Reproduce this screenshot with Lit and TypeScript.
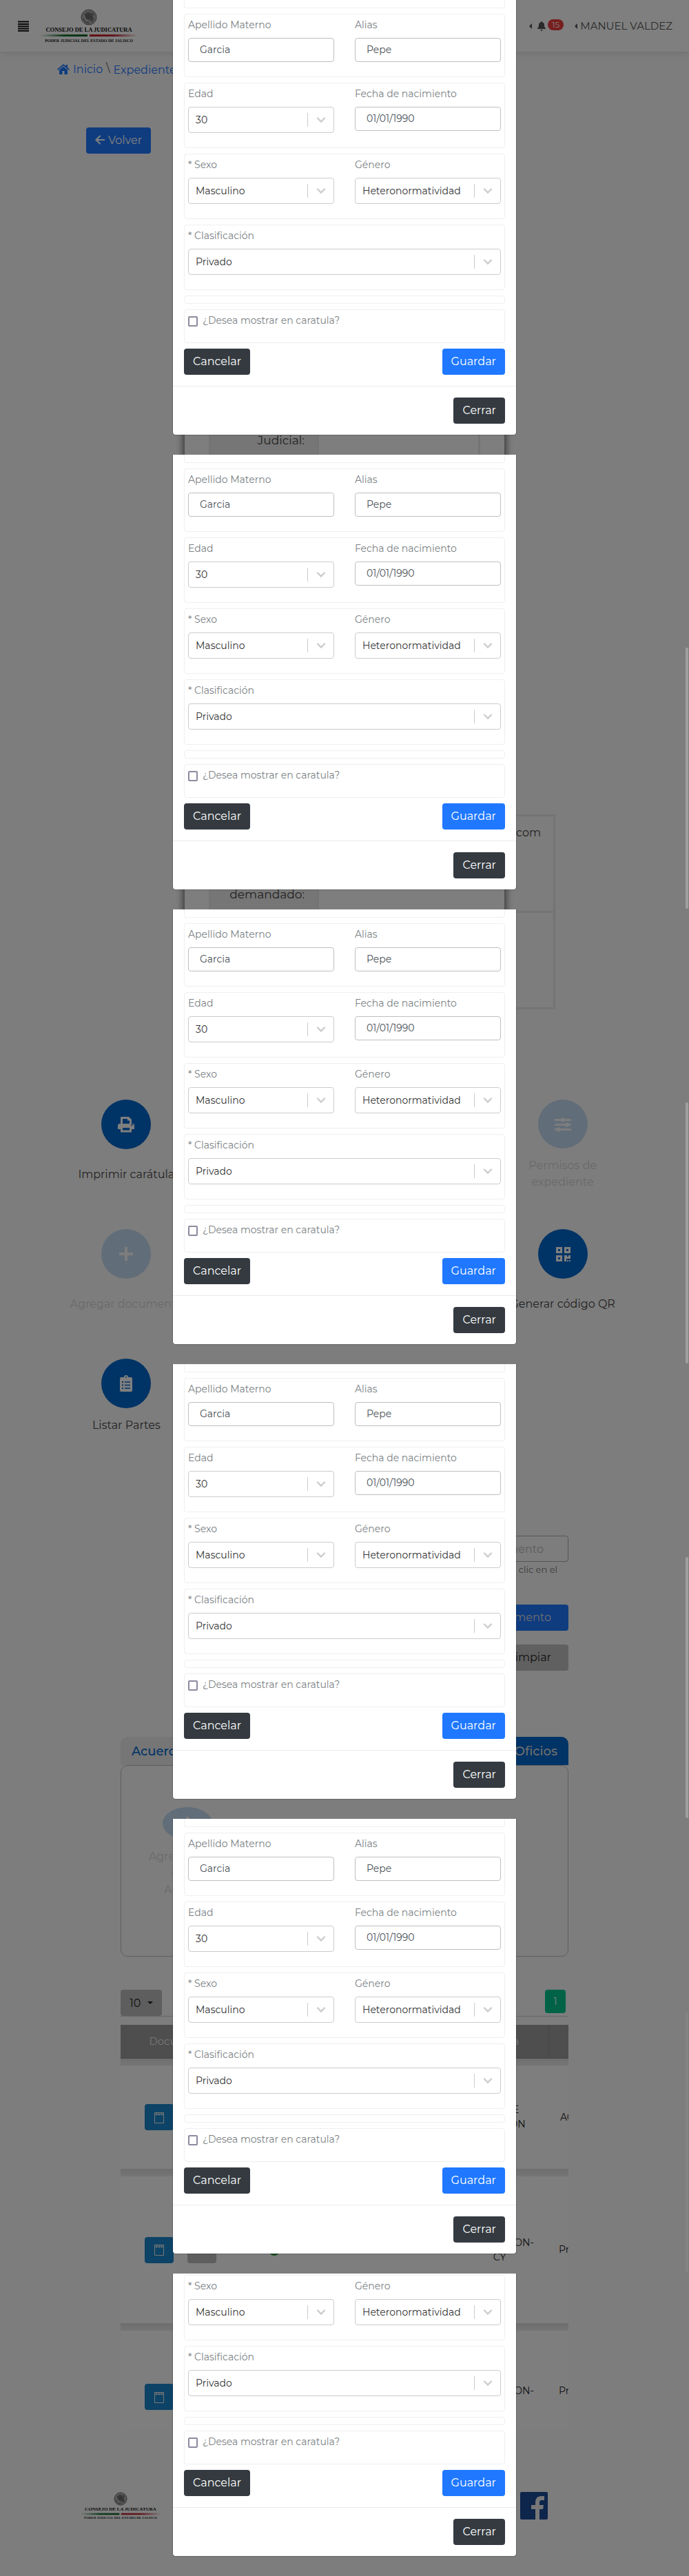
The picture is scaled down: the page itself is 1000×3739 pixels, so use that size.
import { LitElement, html, css, svg, nothing } from "lit";
import { customElement, property } from "lit/decorators.js";

const fontStack = css`Montserrat, Inter, "Open Sans", "Liberation Sans", sans-serif`;

const base = css`
  * {
    box-sizing: border-box;
  }
  button,
  input,
  select {
    font-family: inherit;
    margin: 0;
  }
  button {
    cursor: pointer;
  }
  a {
    text-decoration: none;
    color: inherit;
  }
  svg {
    display: block;
    flex: none;
  }
`;

const icons = {
  print: svg`<path fill="currentColor" fill-rule="evenodd" d="M5 1h11l4 4v6h1.500q2.500 0 2.500 2.500V19h-4v4.500H4V19H0v-5.500Q0 11 2.500 11H4V2q0-1 1-1zM7 4v7h10V6.500h-3V4zM7 17v3.500h10V17zM19.200 12.700a1.300 1.300 0 1 0 2.600 0a1.300 1.300 0 1 0-2.600 0z"/>`,
  plus: svg`<path fill="currentColor" d="M10 2h4v8h8v4h-8v8h-4v-8H2v-4h8z"/>`,
  list: svg`<path fill="currentColor" fill-rule="evenodd" d="M5 3h4a3 3 0 0 1 6 0h4q2 0 2 2v17q0 2-2 2H5q-2 0-2-2V5q0-2 2-2zM11 3a1 1 0 1 0 2 0a1 1 0 1 0-2 0zM6 9v2h2V9zm4 .3v1.400h8V9.300zM6 13.500v2h2v-2zm4 .3v1.400h8v-1.400zM6 18v2h2v-2zm4 .3v1.400h8v-1.400z"/>`,
  sliders: svg`<path fill="currentColor" d="M0 4h10V2.500h4V4h10v3H14v1.500h-4V7H0zM0 11h16V9.500h4V11h4v3h-4v1.500h-4V14H0zM0 18h4v-1.500h4V18h16v3H8v1.500H4V21H0z"/>`,
  qr: svg`<path fill="currentColor" fill-rule="evenodd" d="M2 2h9v9H2zM5 5v3h3V5zM14 2h9v9h-9zM17 5v3h3V5zM2 14h9v9H2zM5 17v3h3v-3zM14 14h4v2h2v-2h3v5h-6v4h-3zM18 21h2v2h-2zM21 21h2v2h-2z"/>`,
};

@customElement("court-logo")
class CourtLogo extends LitElement {
  static styles = css`
    :host {
      display: block;
    }
    svg {
      display: block;
      width: 100%;
      height: auto;
    }
    .name {
      font: bold 17px "Liberation Serif", serif;
      fill: #111;
    }
    .branch {
      font: bold 12px "Liberation Serif", serif;
      fill: #222;
    }
  `;
  render() {
    return html`<svg viewBox="0 0 284 100" role="img" aria-label="Consejo de la Judicatura">
      <defs>
        <linearGradient id="g"><stop offset="0" stop-color="#2a7a3a" stop-opacity="0" /><stop offset=".5" stop-color="#1d7a35" /><stop offset="1" stop-color="#12602a" /></linearGradient>
        <linearGradient id="r"><stop offset="0" stop-color="#c41c2c" /><stop offset=".5" stop-color="#c4303c" /><stop offset="1" stop-color="#c41c2c" stop-opacity="0" /></linearGradient>
      </defs>
      <g transform="scale(2)">
        <circle cx="71" cy="12" r="11" fill="#b4b4b4" stroke="#666" stroke-width="1" />
        <circle cx="71" cy="12" r="9" fill="none" stroke="#888" stroke-width="1" stroke-dasharray="1 1" />
        <path d="M64 8q5-5 9-3q5 2 4 7q3 3-1 7q-3-1-4-4q-5 0-8-7z" fill="#777" />
        <path d="M63 14q3 7 9 6M67 9l6 6M69 7l6 6M66 12l6 5M76 5l2 4" stroke="#444" fill="none" stroke-width="1" />
        <path d="M0 37h69v3H0z" fill="url(#g)" />
        <path d="M72 37h69v3H72z" fill="url(#r)" />
      </g>
      <text class="name" x="142" y="66" text-anchor="middle">CONSEJO DE LA JUDICATURA</text>
      <text class="branch" x="142" y="95" text-anchor="middle">PODER JUDICIAL DEL ESTADO DE JALISCO</text>
    </svg>`;
  }
}

@customElement("select-field")
class SelectField extends LitElement {
  @property() label = "";
  @property() value = "";
  static styles = [
    base,
    css`
      :host {
        display: block;
      }
      label {
        display: block;
        margin-bottom: 8px;
        line-height: 21px;
        color: #7a7f84;
      }
      .box {
        display: grid;
        grid-template-columns: 1fr 38px;
        align-items: center;
        height: 38px;
        border: 1px solid #ccc;
        border-radius: 4px;
        background: #fff;
      }
      select {
        grid-area: 1 / 1 / 2 / 3;
        width: 100%;
        height: 36px;
        padding: 0 40px 0 10px;
        border: 0;
        background: none;
        appearance: none;
        font-size: inherit;
        font-weight: inherit;
        color: #333;
      }
      .mark {
        grid-area: 1 / 2 / 2 / 3;
        display: grid;
        place-items: center;
        height: 20px;
        border-left: 1px solid #ccc;
        color: #ccc;
        pointer-events: none;
      }
    `,
  ];
  render() {
    return html`<label for="s">${this.label}</label>
      <div class="box">
        <select id="s"><option>${this.value}</option></select>
        <span class="mark"><svg width="14" height="10" viewBox="0 0 14 10"><path d="M2 2.500l5 5l5-5" fill="none" stroke="currentColor" stroke-width="2.400" stroke-linecap="round" /></svg></span>
      </div>`;
  }
}

@customElement("party-modal")
class PartyModal extends LitElement {
  @property({ type: Boolean }) short = false;
  static styles = [
    base,
    css`
      :host {
        display: block;
        width: 50%;
        margin: 0 auto 28px;
        border: 1px solid rgba(0, 0, 0, 0.2);
        border-top: 0;
        border-radius: 0 0 5px 5px;
        background: #fff;
        background-clip: padding-box;
        font-size: 14px;
      }
      .body {
        display: flex;
        flex-direction: column;
        gap: 8px;
        padding: 0 16px 16px;
      }
      .body.short {
        padding-top: 2px;
      }
      .card {
        display: grid;
        grid-template-columns: 1fr 1fr;
        column-gap: 30px;
        padding: 5px 5px 21px;
        border: 1px solid #efefef;
        border-radius: 4px;
      }
      .stub,
      .blank {
        height: 12px;
        border: 1px solid #efefef;
        border-radius: 4px;
      }
      .stub {
        border-top: 0;
        border-radius: 0 0 4px 4px;
      }
      .wide {
        grid-column: 1 / 3;
      }
      .text label {
        display: block;
        margin-bottom: 8px;
        line-height: 21px;
        color: #7a7f84;
      }
      .text input {
        display: block;
        width: 100%;
        height: 35px;
        padding: 0 16px 1px;
        border: 1px solid #bfbfbf;
        border-radius: 4px;
        font-size: 14px;
        color: #495057;
      }
      .check {
        display: flex;
        align-items: center;
        gap: 7px;
        line-height: 21px;
        color: #7a7f84;
      }
      .check input {
        appearance: none;
        width: 14px;
        height: 15px;
        margin-top: 2px;
        border: 2px solid #8d8a9f;
        border-radius: 2px;
        background: #fff;
      }
      .actions,
      .footer {
        display: flex;
        justify-content: space-between;
      }
      .footer {
        justify-content: flex-end;
        padding: 16px;
        border-top: 1px solid #e9ecef;
      }
      button {
        height: 38px;
        padding: 0 13px 2px;
        border: 0;
        border-radius: 4px;
        font-size: 16px;
        color: #fff;
        background: #343a40;
      }
      .save {
        background: #1f78ff;
      }
    `,
  ];
  private text(id: string, label: string, value: string) {
    return html`<div class="text">
      <label for=${id}>${label}</label><input id=${id} type="text" .value=${value} />
    </div>`;
  }
  render() {
    return html`<div class="body ${this.short ? "short" : ""}">
        ${this.short
          ? nothing
          : html`<div class="stub"></div>
              <div class="card">${this.text("materno", "Apellido Materno", "Garcia")}${this.text("alias", "Alias", "Pepe")}</div>
              <div class="card">
                <select-field label="Edad" value="30"></select-field>
                ${this.text("fecha", "Fecha de nacimiento", "01/01/1990")}
              </div>`}
        <div class="card">
          <select-field label="* Sexo" value="Masculino"></select-field>
          <select-field label="Género" value="Heteronormatividad"></select-field>
        </div>
        <div class="card"><select-field class="wide" label="* Clasificación" value="Privado"></select-field></div>
        <div class="blank"></div>
        <div class="card"><label class="check wide"><input type="checkbox" />¿Desea mostrar en caratula?</label></div>
        <div class="actions"><button>Cancelar</button><button class="save">Guardar</button></div>
      </div>
      <div class="footer"><button>Cerrar</button></div>`;
  }
}

@customElement("app-root")
class AppRoot extends LitElement {
  static styles = [
    base,
    css`
      :host {
        display: block;
        position: relative;
        overflow: hidden;
        background: #fbfbfb;
        font-family: ${fontStack};
        font-size: 16px;
        line-height: 24px;
        color: #444;
      }
      .overlay {
        position: absolute;
        inset: 0;
        background: rgba(0, 0, 0, 0.5);
      }
      .slice {
        position: relative;
      }
      .thumb {
        position: absolute;
        right: 1px;
        top: 280px;
        width: 4px;
        height: 379px;
        border-radius: 2px;
        background: #a0a0a0;
      }
      .faint {
        background: #848484;
      }
      .header {
        display: flex;
        align-items: center;
        justify-content: space-between;
        height: 75px;
        padding: 0 24px 0 26px;
        background: #fff;
        box-shadow: 0 2px 10px rgba(0, 0, 0, 0.12);
      }
      .brand,
      .user,
      .bell {
        display: flex;
        align-items: center;
      }
      .brand {
        gap: 16px;
      }
      .menu {
        padding: 0;
        border: 0;
        background: none;
        color: #111;
      }
      .brand court-logo {
        width: 142px;
      }
      .user {
        gap: 16px;
        font-size: 15px;
        color: #555;
      }
      .user a {
        display: flex;
        align-items: center;
        gap: 4px;
      }
      .user .bell {
        gap: 8px;
      }
      .badge {
        margin: -4px 0 0 -5px;
        padding: 0 6px;
        border-radius: 10px;
        background: #ee3c3c;
        color: #fff;
        font-size: 12px;
        line-height: 16px;
      }
      .crumbs {
        display: flex;
        gap: 5px;
        padding: 12px 83px 0;
        color: #666;
      }
      .crumbs a {
        display: flex;
        align-items: center;
        gap: 5px;
        color: #1f78ff;
      }
      .crumbs .here {
        padding-top: 3px;
      }
      .main {
        padding: 71px 125px 0;
      }
      .back {
        display: flex;
        align-items: center;
        gap: 5px;
        height: 38px;
        padding: 0 13px 2px;
        border: 0;
        border-radius: 4px;
        background: #1f78ff;
        color: #fff;
        font-size: 16px;
      }
      .case {
        height: 1248px;
        margin: 33px 143px 0;
        padding: 35px;
        background: #fdfdfd;
        box-shadow: 0 0 10px 2px rgba(0, 0, 0, 0.6);
      }
      .case table {
        border-collapse: collapse;
        width: 394px;
        table-layout: fixed;
        margin-bottom: 20px;
      }
      .case .mail {
        width: 503px;
      }
      .case th {
        width: 157px;
        padding: 12px 18px 4px;
        border: 3px solid #e8e8e8;
        background: #ececec;
        font-size: 17px;
        font-weight: 400;
        text-align: right;
        vertical-align: bottom;
      }
      .case td {
        padding: 12px 18px;
        border: 3px solid #e8e8e8;
        text-align: right;
        vertical-align: top;
      }
      .case .court th {
        height: 380px;
        padding-bottom: 20px;
      }
      .rest th {
        height: 488px;
      }
      .party th {
        height: 140px;
      }
      .case .party th {
        padding-bottom: 12px;
      }
      .actions {
        display: grid;
        grid-template-columns: 1fr 1fr 1fr;
        row-gap: 56px;
        padding: 92px 25px 0;
        text-align: center;
      }
      .action {
        display: flex;
        flex-direction: column;
        align-items: center;
        gap: 13px;
      }
      .action.tall {
        height: 132px;
      }
      .label {
        display: grid;
        flex: 1;
        align-items: center;
        max-width: 160px;
      }
      .wide {
        max-width: none;
      }
      .disc {
        display: grid;
        place-items: center;
        width: 72px;
        height: 72px;
        padding: 0;
        border: 0;
        border-radius: 50%;
        background: #0067cc;
        color: #fff;
      }
      .off {
        opacity: 0.22;
      }
      .page {
        padding: 0 175px;
      }
      .search {
        display: flex;
        flex-direction: column;
        align-items: flex-end;
        padding-top: 148px;
      }
      .search label {
        width: 60%;
        padding: 0 16px;
        text-align: right;
        font-size: 13px;
        line-height: 22px;
        color: #777;
      }
      .search input {
        width: 60%;
        height: 38px;
        padding: 0 35px;
        border: 1px solid #aaa;
        border-radius: 4px;
        background: none;
        text-align: right;
        font-size: 16px;
      }
      .search input::placeholder {
        color: #bbb;
      }
      .search button {
        height: 38px;
        margin-bottom: 20px;
        padding: 0 25px 2px;
        border: 0;
        border-radius: 4px;
        font-size: 16px;
      }
      .find {
        margin-top: 40px;
        background: #1f78ff;
        color: #ddd;
      }
      .clear {
        background: #c0c0c0;
        color: #222;
      }
      .tabs {
        display: flex;
        justify-content: space-between;
        padding-top: 76px;
      }
      .tab {
        height: 41px;
        padding: 0 16px;
        border: 0;
        border-radius: 10px 10px 0 0;
        background: #ececec;
        color: #0067cc;
        font-size: 18px;
        font-weight: 500;
      }
      .tab.on {
        background: #0067cc;
        color: #ddd;
      }
      .panel {
        height: 278px;
        padding: 60px;
        border: 1px solid #bdbdbd;
        border-radius: 10px;
      }
      .panel .action {
        width: 72px;
      }
      .panel .label {
        width: 130px;
        text-align: center;
        white-space: pre-line;
      }
      .pager {
        display: flex;
        justify-content: space-between;
        margin-top: 48px;
        padding-right: 4px;
        border-bottom: 1px solid #ccc;
      }
      .size {
        display: flex;
        align-items: center;
        gap: 10px;
        height: 38px;
        padding: 0 13px;
        border: 0;
        border-radius: 4px;
        background: #bdbdbd;
        color: #222;
        font-size: 16px;
      }
      .num {
        width: 30px;
        height: 34px;
        padding: 0;
        border: 0;
        border-radius: 4px;
        background: #00c68e;
        color: #fff;
        font-size: 14px;
      }
      .scroll {
        overflow: hidden;
        margin-top: 12px;
        background: #fdfdfd;
      }
      .docs {
        border-collapse: collapse;
        table-layout: fixed;
        width: 729px;
        font-size: 14px;
        line-height: 21px;
        text-align: center;
        color: #222;
      }
      .docs th {
        height: 48px;
        padding: 0;
        border-right: 1px solid #8a8a8a;
        border-bottom: 1px solid #888;
        background: #9c9c9c;
        color: #eee;
        font-size: 15px;
        font-weight: 400;
      }
      .docs td {
        height: 213px;
        padding: 0;
      }
      .docs .first td {
        height: 150px;
      }
      .docs .last td {
        height: 144px;
        padding-top: 77px;
        vertical-align: top;
      }
      .docs .band td {
        height: 11px;
        background: linear-gradient(#dcdcdc, #ececec);
      }
      .c1 {
        width: 174px;
      }
      .c2 {
        width: 98px;
      }
      .c3 {
        width: 207px;
      }
      .c4 {
        width: 142px;
      }
      .tools {
        display: flex;
        justify-content: center;
        gap: 20px;
      }
      .tool {
        display: grid;
        place-items: center;
        width: 42px;
        height: 38px;
        padding: 0;
        border: 0;
        border-radius: 4px;
        background: #1a86cc;
        color: #eee;
      }
      .tool.grey {
        background: #bdbdbd;
      }
      .ok {
        width: 16px;
        height: 16px;
        margin: 0 auto;
        border-radius: 50%;
        background: #2c9a3c;
      }
      .footer {
        display: flex;
        justify-content: space-between;
        padding: 90px 205px 82px 116px;
      }
      .footer court-logo {
        width: 118px;
      }
    `,
  ];

  private action(icon: unknown, label: string, opts: { off?: boolean; wide?: boolean; short?: boolean } = {}) {
    return html`<div class="action ${opts.short ? "" : "tall"} ${opts.off ? "off" : ""}">
      <button class="disc" aria-label=${label} ?disabled=${opts.off}>
        <svg width="24" height="24" viewBox="0 0 24 24">${icon}</svg>
      </button>
      <span class="label ${opts.wide ? "wide" : ""}">${label}</span>
    </div>`;
  }

  private row(kind: string, what: string, who: string) {
    const cal = html`<svg width="14" height="17" viewBox="0 0 14 17"><path d="M.5 1.500h13v15H.5z" fill="none" stroke="currentColor" /><path d="M1 2h12v3H1z" fill="currentColor" opacity=".35" /><path d="M2 4.500h2.500M5.800 4.500h2.500M9.600 4.500H12M3.200 2.500v3M7 2.500v3M10.800 2.500v3" stroke="currentColor" /></svg>`;
    return html`<tr class=${kind}>
      <td><div class="tools"><button class="tool" aria-label="Ver">${cal}</button><button class="tool grey" aria-label="Descargar"></button></div></td>
      <td><div class="ok"></div></td>
      <td></td>
      <td>${what.split("|").map((t, i) => (i ? html`<br />${t}` : t))}</td>
      <td>${who}</td>
    </tr>`;
  }

  render() {
    const caret = html`<svg width="4" height="8" viewBox="0 0 4 8"><path d="M4 0v8L0 4z" fill="currentColor" /></svg>`;
    const band = html`<tr class="band"><td colspan="5"></td></tr>`;
    return html`
      <header class="header">
        <div class="brand">
          <button class="menu" aria-label="Menú">
            <svg width="16" height="16" viewBox="0 0 16 16"><path d="M0 1.500h16M0 5h16M0 8.300h16M0 11.500h16M0 14.800h16" stroke="currentColor" stroke-width="2" /></svg>
          </button>
          <court-logo></court-logo>
        </div>
        <nav class="user">
          <a class="bell" href="#">${caret}<svg width="12" height="14" viewBox="0 0 12 14"><path d="M6 0q1 0 1 1q3 1 3 4q0 4 2 5v1H0v-1q2-1 2-5q0-3 3-4q0-1 1-1zM4.500 12h3q0 2-1.500 2t-1.500-2z" fill="currentColor" /></svg><span class="badge">15</span></a>
          <a href="#">${caret}MANUEL VALDEZ</a>
        </nav>
      </header>
      <nav class="crumbs">
        <a href="#"><svg width="18" height="15" viewBox="0 0 18 15"><path d="M9 3.500l6 5V14q0 1-1 1h-3.500v-5h-3v5H4q-1 0-1-1V8.500zM9 0l3.500 3V1H15v4l3 2.500L17 9L9 2.300L1 9L0 7.500z" fill="currentColor" /></svg>Inicio</a>
        <span>\\</span>
        <a class="here" href="#">Expediente</a>
      </nav>
      <div class="main">
        <button class="back"><svg width="14" height="14" viewBox="0 0 14 14"><path d="M14 7H2M7.500 1L1.500 7l6 6" fill="none" stroke="currentColor" stroke-width="2.200" /></svg>Volver</button>
        <section class="case">
          <table>
            <tr class="court"><th>Órgano Judicial:</th><td></td></tr>
            <tr class="rest"><th></th><td></td></tr>
          </table>
          <table class="mail">
            <tr class="party"><th>Correo del demandado:</th><td>.com</td></tr>
            <tr class="party"><th></th><td></td></tr>
          </table>
        </section>
      </div>
      <section class="actions">
        ${this.action(icons.print, "Imprimir carátula")}<span></span>${this.action(icons.sliders, "Permisos de expediente", { off: true })}
        ${this.action(icons.plus, "Agregar documento", { off: true, wide: true })}<span></span>${this.action(icons.qr, "Generar código QR")}
        ${this.action(icons.list, "Listar Partes", { short: true })}
      </section>
      <div class="page">
        <section class="search">
          <input id="doc" type="text" placeholder="documento" />
          <label for="doc">haz clic en el</label>
          <button class="find">Buscar documento</button>
          <button class="clear">Limpiar</button>
        </section>
        <div class="tabs"><button class="tab">Acuerdos</button><button class="tab on">Oficios</button></div>
        <section class="panel">${this.action(icons.plus, "Agregar oficio\ncomo\nAcuerdo", { off: true })}</section>
        <div class="pager">
          <button class="size">10<svg width="8" height="4" viewBox="0 0 8 4"><path d="M0 0h8L4 4z" fill="currentColor" /></svg></button>
          <button class="num">1</button>
        </div>
        <div class="scroll">
          <table class="docs">
            <colgroup><col class="c1" /><col class="c2" /><col class="c3" /><col class="c4" /><col /></colgroup>
            <tr><th>Documento</th><th></th><th></th><th>Materia</th><th></th></tr>
            ${band}${this.row("first", "CITA DE|ADMISIÓN", "ACUERDO")}
            ${band}${this.row("", "PROMOCION-|CY", "Promoción")}
            ${band}${this.row("last", "PROMOCION-|CY", "Promoción")}
          </table>
        </div>
      </div>
      <footer class="footer">
        <court-logo></court-logo>
        <a href="#" aria-label="Facebook"><svg width="40" height="40" viewBox="0 0 40 40"><rect width="40" height="40" rx="2" fill="#1c4a98" /><path d="M22 40V25h-6v-6h6v-4q0-9 9-9h4v6h-4q-3 0-3 3v4h6l-1 6h-5v15z" fill="#eee" /></svg></a>
      </footer>
      <div class="overlay">
        ${[0, 1, 2, 3, 4, 5].map(
          (i) => html`<div class="slice">
            <party-modal ?short=${i === 5}></party-modal>
            ${i > 0 && i < 5 ? html`<span class="thumb ${i === 4 ? "faint" : ""}"></span>` : nothing}
          </div>`
        )}
      </div>
    `;
  }
}
